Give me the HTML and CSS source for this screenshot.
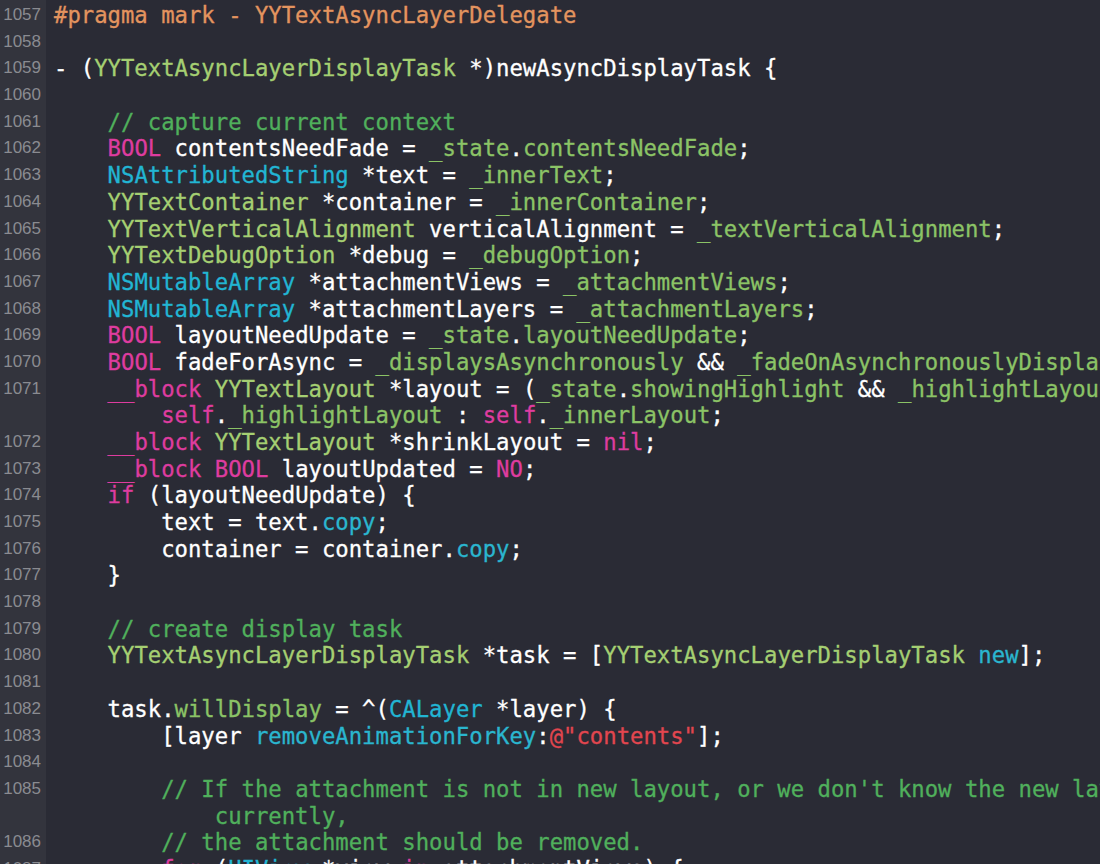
FILE: index.html
```html
<!DOCTYPE html>
<html lang="en">
<head>
	<meta charset="UTF-8">
	<title>YYTextAsyncLayer.m</title>
	<link rel="stylesheet" href="styles.css">
</head>
<body>
	<div id="editor">
		<div class="line"><span class="num">1057</span><div class="code"><span class="pp">#pragma mark - YYTextAsyncLayerDelegate</span></div></div>
		<div class="line"><span class="num">1058</span><div class="code"></div></div>
		<div class="line"><span class="num">1059</span><div class="code">- (<span class="tp">YYTextAsyncLayerDisplayTask</span> *)newAsyncDisplayTask {</div></div>
		<div class="line"><span class="num">1060</span><div class="code"></div></div>
		<div class="line"><span class="num">1061</span><div class="code">    <span class="cm">// capture current context</span></div></div>
		<div class="line"><span class="num">1062</span><div class="code">    <span class="kw">BOOL</span> contentsNeedFade = <span class="iv">_state</span>.<span class="iv">contentsNeedFade</span>;</div></div>
		<div class="line"><span class="num">1063</span><div class="code">    <span class="sys">NSAttributedString</span> *text = <span class="iv">_innerText</span>;</div></div>
		<div class="line"><span class="num">1064</span><div class="code">    <span class="tp">YYTextContainer</span> *container = <span class="iv">_innerContainer</span>;</div></div>
		<div class="line"><span class="num">1065</span><div class="code">    <span class="tp">YYTextVerticalAlignment</span> verticalAlignment = <span class="iv">_textVerticalAlignment</span>;</div></div>
		<div class="line"><span class="num">1066</span><div class="code">    <span class="tp">YYTextDebugOption</span> *debug = <span class="iv">_debugOption</span>;</div></div>
		<div class="line"><span class="num">1067</span><div class="code">    <span class="sys">NSMutableArray</span> *attachmentViews = <span class="iv">_attachmentViews</span>;</div></div>
		<div class="line"><span class="num">1068</span><div class="code">    <span class="sys">NSMutableArray</span> *attachmentLayers = <span class="iv">_attachmentLayers</span>;</div></div>
		<div class="line"><span class="num">1069</span><div class="code">    <span class="kw">BOOL</span> layoutNeedUpdate = <span class="iv">_state</span>.<span class="iv">layoutNeedUpdate</span>;</div></div>
		<div class="line"><span class="num">1070</span><div class="code">    <span class="kw">BOOL</span> fadeForAsync = <span class="iv">_displaysAsynchronously</span> &amp;&amp; <span class="iv">_fadeOnAsynchronouslyDisplay</span>;</div></div>
		<div class="line"><span class="num">1071</span><div class="code wrapped">
			<div class="row">    <span class="kw">__block</span> <span class="tp">YYTextLayout</span> *layout = (<span class="iv">_state</span>.<span class="iv">showingHighlight</span> &amp;&amp; <span class="iv">_highlightLayout</span>) ?</div>
			<div class="row">        <span class="kw">self</span>.<span class="iv">_highlightLayout</span> : <span class="kw">self</span>.<span class="iv">_innerLayout</span>;</div>
		</div></div>
		<div class="line"><span class="num">1072</span><div class="code">    <span class="kw">__block</span> <span class="tp">YYTextLayout</span> *shrinkLayout = <span class="kw">nil</span>;</div></div>
		<div class="line"><span class="num">1073</span><div class="code">    <span class="kw">__block</span> <span class="kw">BOOL</span> layoutUpdated = <span class="kw">NO</span>;</div></div>
		<div class="line"><span class="num">1074</span><div class="code">    <span class="kw">if</span> (layoutNeedUpdate) {</div></div>
		<div class="line"><span class="num">1075</span><div class="code">        text = text.<span class="sm">copy</span>;</div></div>
		<div class="line"><span class="num">1076</span><div class="code">        container = container.<span class="sm">copy</span>;</div></div>
		<div class="line"><span class="num">1077</span><div class="code">    }</div></div>
		<div class="line"><span class="num">1078</span><div class="code"></div></div>
		<div class="line"><span class="num">1079</span><div class="code">    <span class="cm">// create display task</span></div></div>
		<div class="line"><span class="num">1080</span><div class="code">    <span class="tp">YYTextAsyncLayerDisplayTask</span> *task = [<span class="tp">YYTextAsyncLayerDisplayTask</span> <span class="sm">new</span>];</div></div>
		<div class="line"><span class="num">1081</span><div class="code"></div></div>
		<div class="line"><span class="num">1082</span><div class="code">    task.<span class="iv">willDisplay</span> = ^(<span class="sys">CALayer</span> *layer) {</div></div>
		<div class="line"><span class="num">1083</span><div class="code">        [layer <span class="sm">removeAnimationForKey</span>:<span class="str">@"contents"</span>];</div></div>
		<div class="line"><span class="num">1084</span><div class="code"></div></div>
		<div class="line"><span class="num">1085</span><div class="code wrapped">
			<div class="row">        <span class="cm">// If the attachment is not in new layout, or we don't know the new layout</span></div>
			<div class="row">            <span class="cm">currently,</span></div>
		</div></div>
		<div class="line"><span class="num">1086</span><div class="code">        <span class="cm">// the attachment should be removed.</span></div></div>
		<div class="line"><span class="num">1087</span><div class="code">        <span class="kw">for</span> (<span class="sys">UIView</span> *view <span class="kw">in</span> attachmentViews) {</div></div>
	</div>
</body>
</html>
```

FILE: styles.css
```css
/* Reset */
html,body{ margin:0; padding:0;}
body{ background:#2a2b35; overflow:hidden;}

/* 编辑器 */
#editor{
	height: 864px;
	padding-top: 2px;
	box-sizing: border-box;
	overflow: hidden;
	background: linear-gradient(to right, #33343d 46px, #2a2b35 46px);
}
.line{
	display: flex;
	line-height: 26.68px;
}
/* 行号 */
.num{
	flex: none;
	width: 46px;
	padding-right: 5px;
	box-sizing: border-box;
	text-align: right;
	font-family: "Liberation Sans", Arial, sans-serif;
	font-size: 17px;
	color: #8a8b91;
}
/* 代码 */
.code{
	flex: 1;
	padding-left: 8px;
	min-height: 26.68px;
	white-space: pre;
	font-family: "DejaVu Sans Mono", monospace;
	font-size: 22.25px;
	color: #ffffff;
	-webkit-text-stroke: 0.3px currentColor;
}
/* 自动换行的续行 */
.code.wrapped{
	white-space: normal;
}
.code .row{
	height: 26.68px;
	white-space: pre;
}

/* 语法高亮 */
.pp{ color:#e3945f;}
.cm{ color:#50b05c;}
.kw{ color:#de3c9f;}
.tp{ color:#a5cf72;}
.iv{ color:#8bc366;}
.sys{ color:#22b5d3;}
.sm{ color:#2ab6cf;}
.str{ color:#e2464f;}
```
